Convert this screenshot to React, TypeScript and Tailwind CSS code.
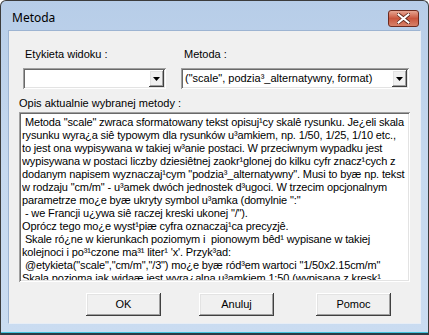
const lines = [
  ' Metoda "scale" zwraca sformatowany tekst opisuj¹cy skalê rysunku. Je¿eli skala',
  'rysunku wyra¿a siê typowym dla rysunków u³amkiem, np. 1/50, 1/25, 1/10 etc.,',
  'to jest ona wypisywana w takiej w³anie postaci. W przeciwnym wypadku jest',
  'wypisywana w postaci liczby dziesiêtnej zaokr¹glonej do kilku cyfr znacz¹cych z',
  'dodanym napisem wyznaczaj¹cym "podzia³_alternatywny". Musi to byæ np. tekst',
  'w rodzaju "cm/m" - u³amek dwóch jednostek d³ugoci. W trzecim opcjonalnym',
  'parametrze mo¿e byæ ukryty symbol u³amka (domylnie ":"',
  ' - we Francji u¿ywa siê raczej kreski ukonej "/").',
  'Oprócz tego mo¿e wyst¹piæ cyfra oznaczaj¹ca precyzjê.',
  ' Skale ró¿ne w kierunkach poziomym i  pionowym bêd¹ wypisane w takiej',
  'kolejnoci i po³¹czone ma³¹ liter¹ \'x\'. Przyk³ad:',
  ' @etykieta("scale","cm/m","/3") mo¿e byæ ród³em wartoci "1/50x2.15cm/m"',
  'Skala pozioma jak widaæ jest wyra¿alna u³amkiem 1:50 (wypisana z kresk¹',
];

const sunken =
  "shadow-[inset_1px_1px_0_#a0a0a0,inset_-1px_-1px_0_#ffffff,inset_2px_2px_0_#696969,inset_-2px_-2px_0_#e3e3e3]";
const raised =
  "shadow-[inset_-1px_-1px_0_#404040,inset_1px_1px_0_#ffffff,inset_-2px_-2px_0_#a0a0a0,inset_2px_2px_0_#e3e3e3]";

function Combo({ text, width }: { text?: string; width: string }) {
  return (
    <div className={`${width} h-[21px] bg-white flex items-center pl-[4px] pr-[2px] ${sunken}`}>
      <span className="flex-1 whitespace-pre overflow-hidden">{text}</span>
      <div className={`w-[15px] h-[17px] bg-[#f0f0f0] flex items-center justify-center ${raised}`}>
        <svg width="7" height="4" viewBox="0 0 7 4">
          <path d="M0 0h7L3.5 4z" fill="#000" />
        </svg>
      </div>
    </div>
  );
}

function Button({ label }: { label: string }) {
  return (
    <div className={`w-[75px] h-[23px] bg-[#f0f0f0] flex items-center justify-center ${raised}`}>
      {label}
    </div>
  );
}

export default function App() {
  return (
    <div className="w-[429px] h-[335px] flex flex-col rounded-t-[6px] border border-b-0 border-[#3c3c3c] bg-gradient-to-b from-[#b7cde8] via-[#c6d9ef] to-[#cadcf1] font-['Liberation_Sans',Arial,sans-serif] text-[11px] leading-[13px] text-black overflow-hidden">
      {/* title bar */}
      <div className="h-[29px] flex items-start pl-[11px] pr-[9px] shrink-0">
        <span className="mt-[9px] font-['Noto_Sans',sans-serif] text-[12px] leading-[16px] text-black">Metoda</span>
        <div className="flex-1" />
        <div className="mt-[9px] w-[31px] h-[17px] rounded-[3px] border border-[#6d2a1e] bg-gradient-to-b from-[#e6a592] via-[#c9553d] to-[#d7826a] flex items-center justify-center">
          <svg width="13" height="11" viewBox="0 0 13 11">
            <path d="M1.5 1.5l10 8M11.5 1.5l-10 8" stroke="#5a2418" strokeWidth="3.6" strokeLinecap="square" />
            <path d="M1.5 1.5l10 8M11.5 1.5l-10 8" stroke="#ffffff" strokeWidth="2" strokeLinecap="square" />
          </svg>
        </div>
      </div>

      {/* client area */}
      <div className="mx-[7px] h-[294px] shrink-0 bg-[#f0f0f0] border border-[#9db4d2] border-b-[#e8eef6] border-r-[#e8eef6] flex flex-col">
        <div className="flex mt-[17px] ml-[14px]">
          <div className="flex flex-col w-[158px]">
            <span className="ml-[2px]">Etykieta widoku :</span>
            <div className="mt-[7px]">
              <Combo width="w-[143px]" />
            </div>
          </div>
          <div className="flex flex-col">
            <span className="ml-[3px]">Metoda :</span>
            <div className="mt-[7px]">
              <Combo width="w-[228px]" text={'("scale", podzia³_alternatywny, format)'} />
            </div>
          </div>
        </div>

        <span className="ml-[10px] mt-[8px]">Opis aktualnie wybranej metody :</span>

        <div className={`ml-[10px] mt-[2px] w-[391px] h-[170px] bg-white pt-[4px] pl-[3px] overflow-hidden ${sunken}`}>
          <div className="h-[164px] overflow-hidden tracking-[-0.14px]">
            {lines.map((l, i) => (
              <div key={i} className="whitespace-pre">
                {l}
              </div>
            ))}
          </div>
        </div>

        <div className="flex mt-[11px] ml-[77px] gap-[38px]">
          <Button label="OK" />
          <Button label="Anuluj" />
          <div className="ml-[4px]">
            <Button label="Pomoc" />
          </div>
        </div>
      </div>

      <div className="h-[8px] shrink-0" />
      <div className="h-[1px] bg-[#41c3dc] shrink-0" />
      <div className="flex-1 bg-[#2c3a44]" />
    </div>
  );
}
